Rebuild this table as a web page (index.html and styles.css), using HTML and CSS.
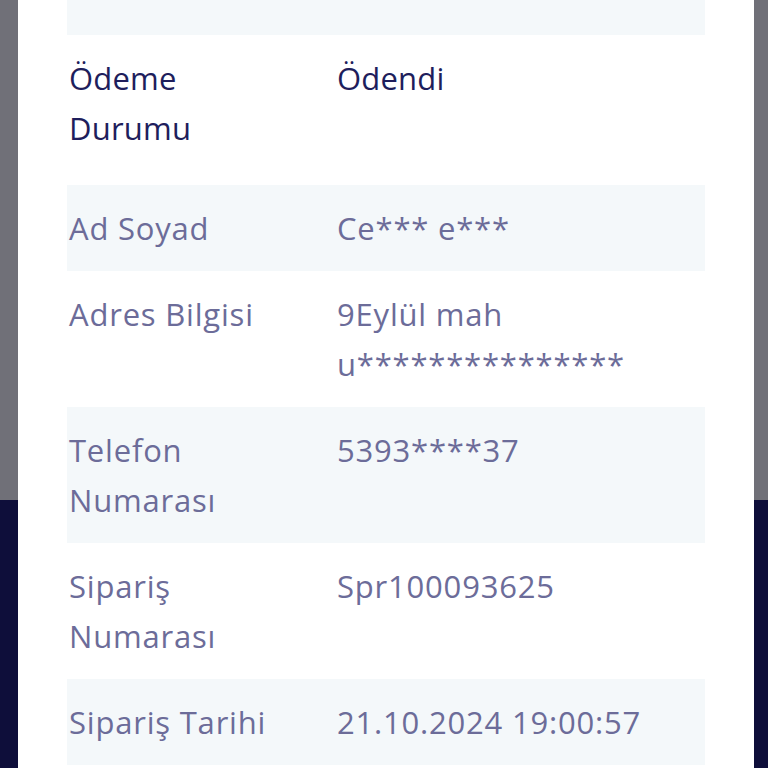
FILE: index.html
```html
<!DOCTYPE html>
<html lang="tr">
<head>
<meta charset="utf-8">
<link rel="stylesheet" href="styles.css">
</head>
<body>
<div class="backdrop">
  <div class="modal">
    <div class="table">
      <div class="row shaded first">
        <div class="label">Sipariş<br>Durumu</div>
        <div class="value bottom">Kargoda</div>
      </div>
      <div class="row status">
        <div class="label">Ödeme<br>Durumu</div>
        <div class="value">Ödendi</div>
      </div>
      <div class="row shaded">
        <div class="label">Ad Soyad</div>
        <div class="value">Ce*** e***</div>
      </div>
      <div class="row">
        <div class="label">Adres Bilgisi</div>
        <div class="value">9Eylül mah<br>u***************</div>
      </div>
      <div class="row shaded">
        <div class="label">Telefon<br>Numarası</div>
        <div class="value">5393****37</div>
      </div>
      <div class="row">
        <div class="label">Sipariş<br>Numarası</div>
        <div class="value">Spr100093625</div>
      </div>
      <div class="row shaded">
        <div class="label">Sipariş Tarihi</div>
        <div class="value">21.10.2024 19:00:57</div>
      </div>
    </div>
  </div>
</div>
</body>
</html>
```

FILE: styles.css
```css
html, body {
  margin: 0;
  padding: 0;
  width: 768px;
  height: 768px;
  overflow: hidden;
}

.backdrop {
  width: 768px;
  height: 768px;
  background: linear-gradient(to bottom, #707078 0, #707078 500px, #0e0e3a 500px, #0e0e3a 100%);
  display: flex;
  padding-left: 18px;
  box-sizing: border-box;
}

.modal {
  width: 736px;
  height: 768px;
  background: #ffffff;
  overflow: hidden;
  padding: 0 49px;
  box-sizing: border-box;
}

.table {
  margin-top: -104px;
  display: flex;
  flex-direction: column;
  font-family: "Open Sans", "Noto Sans", sans-serif;
  font-size: 31px;
  font-weight: 500;
  letter-spacing: 0.8px;
  line-height: 50px;
  color: #6c6c99;
}

.row {
  display: grid;
  grid-template-columns: 268px 1fr;
  padding: 18px 0 18px 2px;
}

.row.shaded {
  background: #f4f8fa;
}

.row.first {
  padding-top: 8px;
  padding-bottom: 31px;
}

.value.bottom {
  align-self: end;
}

.row.status {
  padding-bottom: 32px;
  color: #1e1e5c;
  letter-spacing: 0.2px;
}

.label, .value {
  white-space: nowrap;
}
```
